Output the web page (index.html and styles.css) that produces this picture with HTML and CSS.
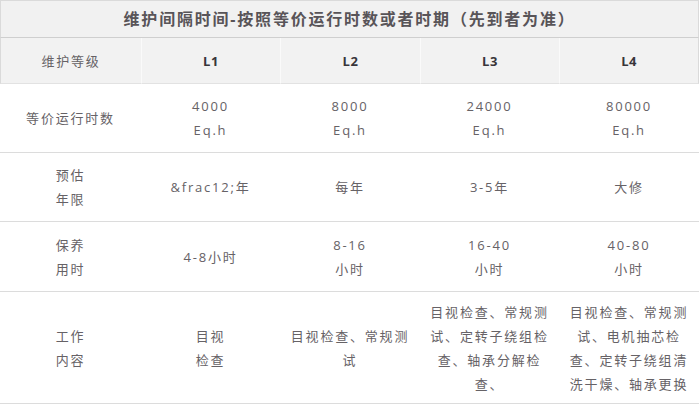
FILE: index.html
```html
<!DOCTYPE html>
<html lang="zh-CN">
<head>
<meta charset="utf-8">
<title>维护间隔时间</title>
<link rel="stylesheet" href="styles.css">
</head>
<body>
<table class="grid">
  <colgroup>
    <col class="c0"><col class="c1"><col class="c2"><col class="c3"><col class="c4">
  </colgroup>
  <thead>
    <tr class="title-row">
      <th colspan="5" class="title">维护间隔时间-按照等价运行时数或者时期（先到者为准）</th>
    </tr>
    <tr class="head-row">
      <th class="label">维护等级</th>
      <th class="lvl">L1</th>
      <th class="lvl">L2</th>
      <th class="lvl">L3</th>
      <th class="lvl last">L4</th>
    </tr>
  </thead>
  <tbody>
    <tr class="r1">
      <td>等价运行时数</td>
      <td>4000<br>Eq.h</td>
      <td>8000<br>Eq.h</td>
      <td>24000<br>Eq.h</td>
      <td>80000<br>Eq.h</td>
    </tr>
    <tr class="r2">
      <td>预估<br>年限</td>
      <td>&amp;frac12;年</td>
      <td>每年</td>
      <td>3-5年</td>
      <td>大修</td>
    </tr>
    <tr class="r3">
      <td>保养<br>用时</td>
      <td>4-8小时</td>
      <td>8-16<br>小时</td>
      <td>16-40<br>小时</td>
      <td>40-80<br>小时</td>
    </tr>
    <tr class="r4">
      <td>工作<br>内容</td>
      <td>目视<br>检查</td>
      <td>目视检查、常规测<br>试</td>
      <td>目视检查、常规测<br>试、定转子绕组检<br>查、轴承分解检<br>查、</td>
      <td>目视检查、常规测<br>试、电机抽芯检<br>查、定转子绕组清<br>洗干燥、轴承更换</td>
    </tr>
  </tbody>
</table>
</body>
</html>
```

FILE: styles.css
```css
html, body {
  margin: 0;
  padding: 0;
  background: #ffffff;
}

.grid {
  width: 699px;
  table-layout: fixed;
  border-collapse: separate;
  border-spacing: 0;
  font-family: "Open Sans", "Noto Sans CJK SC", sans-serif;
  font-size: 13px;
  color: #666266;
  letter-spacing: 1.8px;
}

.c0 { width: 141px; }
.c1 { width: 139px; }
.c2 { width: 140px; }
.c3 { width: 139px; }
.c4 { width: 140px; }

.grid th,
.grid td {
  padding: 0 8px;
  text-align: center;
  vertical-align: middle;
  line-height: 24px;
}

.title {
  height: 36px;
  background: #f1f1f1;
  border: 1px solid #dadada;
  border-bottom-color: #cfcfcf;
  font-size: 16px;
  font-weight: bold;
  letter-spacing: 1.8px;
  color: #585458;
  padding-top: 1px;
}

.head-row th {
  height: 45px;
  background: #f2f2f2;
  border-bottom: 1px solid #e2e2e2;
  border-left: 1px solid #fafafa;
}

.head-row th.label {
  border-left: 1px solid #dadada;
  font-weight: normal;
  color: #666266;
}

.head-row th.last {
  border-right: 1px solid #dadada;
}

.lvl {
  font-weight: bold;
  color: #38353a;
  letter-spacing: 0.5px;
}

.grid td {
  border-bottom: 1px solid #dcdcdc;
}

.r1 td { height: 68px; }
.r2 td { height: 68px; }
.r3 td { height: 69px; }
.r4 td { height: 111px; padding: 0 6px; }
```
